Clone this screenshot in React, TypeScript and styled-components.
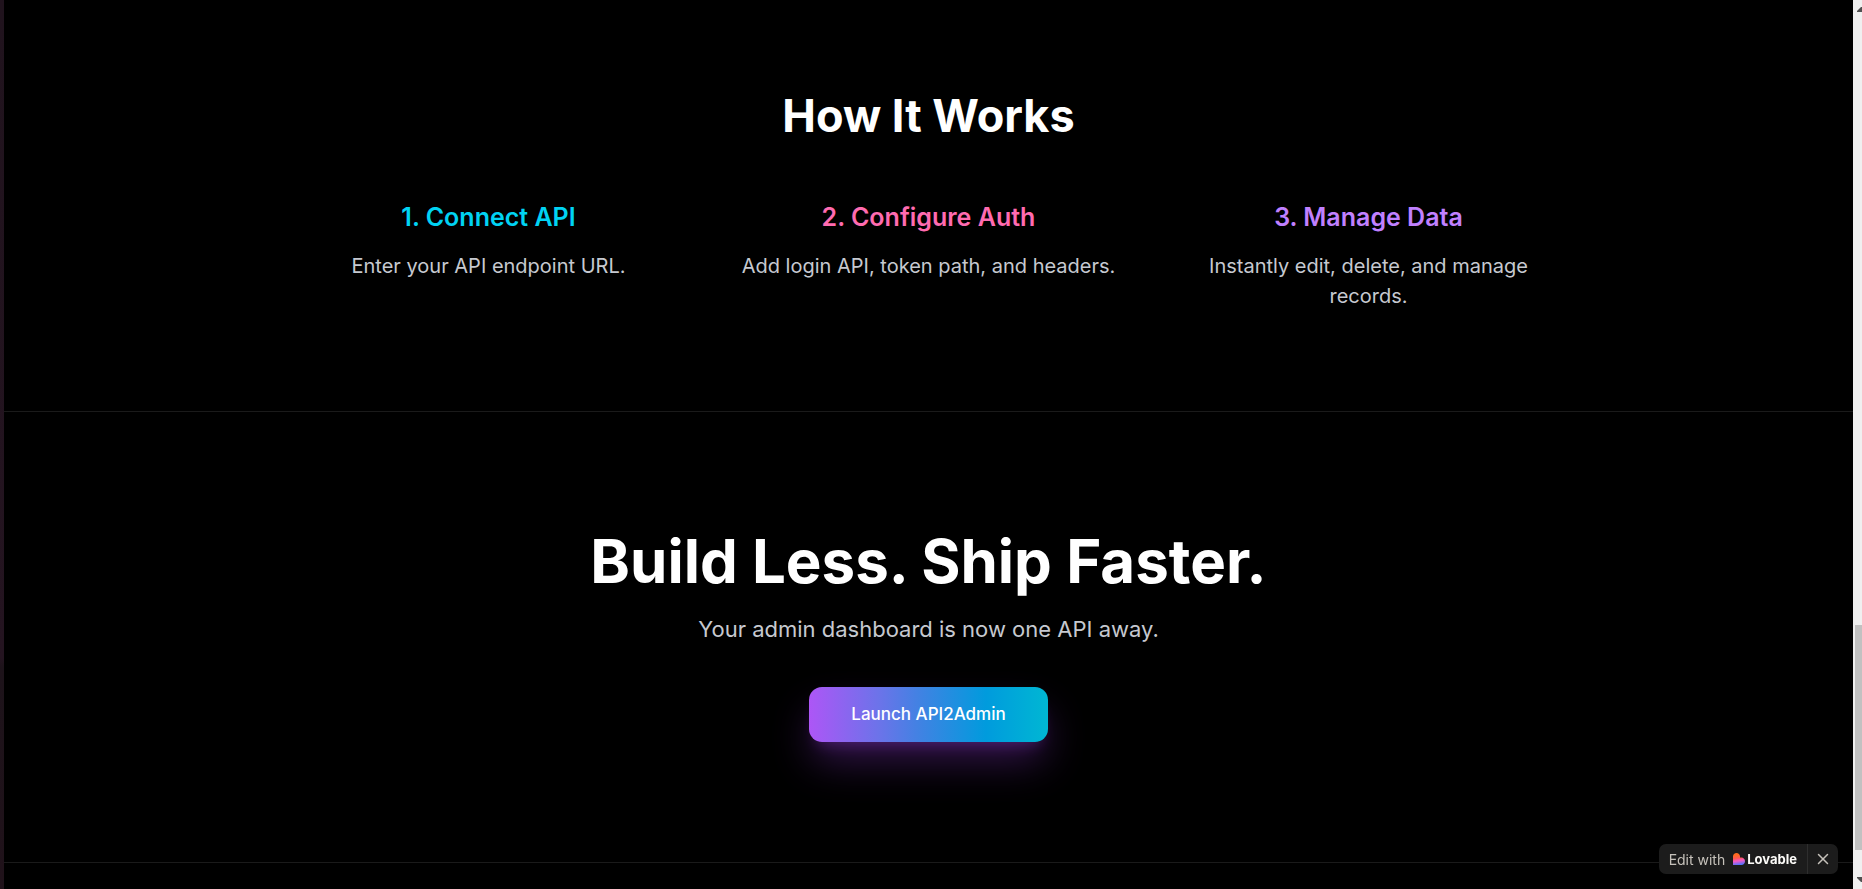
import React from "react";
import styled, { createGlobalStyle } from "styled-components";
import { X } from "lucide-react";

const GlobalStyle = createGlobalStyle`
  * { box-sizing: border-box; }
  body {
    margin: 0;
    background: #000;
    color: #fff;
    font-family: Inter, "Liberation Sans", sans-serif;
  }
  h2, h3, p { margin: 0; }
`;

const Window = styled.div`
  display: flex;
  min-height: 100vh;
`;

const Edge = styled.div`
  flex: 0 0 4px;
  background: linear-gradient(#20131d, #241420 74%, #1d131a 75%, #20121a);
`;

const Page = styled.main`
  flex: 1;
  min-width: 0;
  text-align: center;
`;

const Section = styled.section<{ $top: number; $bottom: number }>`
  padding: ${(p) => p.$top}px 30px ${(p) => p.$bottom}px;

  & + & {
    border-top: 1px solid #1a1a1a;
  }
`;

const Title = styled.h2<{ $large?: boolean }>`
  font-size: ${(p) => (p.$large ? 60 : 45)}px;
  line-height: ${(p) => (p.$large ? 58 : 50)}px;
  font-weight: 700;
`;

const Steps = styled.div`
  display: grid;
  grid-template-columns: repeat(auto-fit, minmax(300px, 1fr));
  gap: 40px;
  max-width: 1280px;
  margin: 60px auto 0;
`;

const StepTitle = styled.h3<{ $color: string }>`
  color: ${(p) => p.$color};
  font-size: 25px;
  line-height: 33px;
  font-weight: 600;
  margin-bottom: 17px;
`;

const StepText = styled.p`
  color: #c6c9d0;
  font-size: 20px;
  line-height: 30px;
`;

const Lead = styled.p`
  margin-top: 22px;
  color: #c6c9d0;
  font-size: 22px;
  line-height: 35px;
`;

const LaunchButton = styled.button`
  margin-top: 40px;
  height: 55px;
  padding: 0 42px;
  border: 0;
  border-radius: 13px;
  color: #fff;
  font: 500 17px/25px Inter, "Liberation Sans", sans-serif;
  background: linear-gradient(to right, #ad56f6, #6a74e9 30%, #4481e3 45%, #009bdd 74%, #00b7d3);
  box-shadow:
    0 22px 40px -4px rgba(173, 70, 255, 0.3),
    0 10px 15px -8px rgba(173, 70, 255, 0.3);
  vertical-align: top;
  cursor: pointer;
`;

const Badge = styled.div`
  position: fixed;
  right: 24px;
  bottom: 15px;
  display: flex;
  height: 30px;
  border-radius: 7px;
  background: #1c1c1c;
  overflow: hidden;
`;

const BadgeLink = styled.a`
  display: flex;
  align-items: center;
  padding: 0 10px;
  color: #c5c1ba;
  font-size: 14px;
  text-decoration: none;
`;

const Brand = styled.span`
  display: flex;
  align-items: center;
  gap: 2px;
  margin-left: 8px;
  color: #fcfbf8;
  font-size: 13px;
  font-weight: 700;
`;

const BadgeClose = styled.button`
  display: flex;
  align-items: center;
  justify-content: center;
  width: 31px;
  padding: 0;
  border: 0;
  border-left: 1px solid #2e2e2e;
  background: transparent;
  color: #c5c1ba;
  cursor: pointer;
`;

const Scrollbar = styled.div`
  flex: 0 0 9px;
  display: flex;
  flex-direction: column;
  align-items: flex-end;
  height: 100vh;
  background: #f0f0f0;
  overflow: hidden;
`;

const Arrow = styled.svg`
  flex: 0 0 20px;
  width: 5px;
  fill: #505050;
`;

const Track = styled.div`
  flex: 1;
  display: flex;
  flex-direction: column;
  width: 7px;
`;

const Before = styled.div`
  flex: 605;
`;

const Thumb = styled.div`
  flex: 225;
  background: #c1c1c1;
`;

const After = styled.div`
  flex: 19;
`;

const Heart = () => (
  <svg width="12" height="12" viewBox="0 0 12 12" aria-hidden="true">
    <defs>
      <linearGradient id="heart" x1="0.35" y1="0" x2="0.5" y2="1">
        <stop offset="0.15" stopColor="#ff6a1f" />
        <stop offset="0.42" stopColor="#ff5a50" />
        <stop offset="0.65" stopColor="#f558c8" />
        <stop offset="1" stopColor="#4b73ff" />
      </linearGradient>
    </defs>
    <path
      d="M0 3.500C0 1.500 1.600 0 3.500 0S7 1.500 7 3.500V4.400H8.500C10.400 4.400 12 6.200 12 8.200S10.400 12 8.500 12H0Z"
      fill="url(#heart)"
    />
  </svg>
);

const steps = [
  { title: "1. Connect API", text: "Enter your API endpoint URL.", color: "#00d3f3" },
  { title: "2. Configure Auth", text: "Add login API, token path, and headers.", color: "#ff6bb0" },
  { title: "3. Manage Data", text: "Instantly edit, delete, and manage records.", color: "#c080ff" },
];

export default function App() {
  return (
    <>
      <GlobalStyle />
      <Window>
        <Edge />
        <Page>
          <Section $top={91} $bottom={100}>
            <Title>How It Works</Title>
            <Steps>
              {steps.map((s) => (
                <div key={s.title}>
                  <StepTitle $color={s.color}>{s.title}</StepTitle>
                  <StepText>{s.text}</StepText>
                </div>
              ))}
            </Steps>
          </Section>
          <Section $top={120} $bottom={120}>
            <Title $large>Build Less. Ship Faster.</Title>
            <Lead>Your admin dashboard is now one API away.</Lead>
            <LaunchButton type="button">Launch API2Admin</LaunchButton>
          </Section>
          <Section $top={26} $bottom={0} />
        </Page>
        <Scrollbar aria-hidden="true">
          <Arrow viewBox="0 0 5 20">
            <path d="M0 12V11L4 7H5V12Z" />
          </Arrow>
          <Track>
            <Before />
            <Thumb />
            <After />
          </Track>
          <Arrow viewBox="0 0 5 20">
            <path d="M0 8V9L4 13H5V8Z" />
          </Arrow>
        </Scrollbar>
      </Window>
      <Badge>
        <BadgeLink href="#lovable">
          Edit with
          <Brand>
            <Heart />
            Lovable
          </Brand>
        </BadgeLink>
        <BadgeClose type="button" aria-label="Close">
          <X size={18} strokeWidth={2} />
        </BadgeClose>
      </Badge>
    </>
  );
}
